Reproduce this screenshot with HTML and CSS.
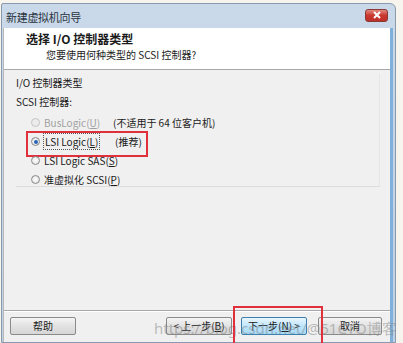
FILE: index.html
```html
<!DOCTYPE html>
<html>
<head>
<meta charset="utf-8">
<link rel="stylesheet" href="styles.css">
</head>
<body>
<div class="page">
  <div class="window">
    <div class="titlebar">
      <span class="title">新建虚拟机向导</span>
      <span class="close"><svg width="10" height="8" viewBox="0 0 10 8"><path d="M2 1 L8 7 M8 1 L2 7" stroke="#fff" stroke-width="2"/></svg></span>
    </div>
    <div class="client">
      <div class="header">
        <div class="h-title">选择 I/O 控制器类型</div>
        <div class="h-sub">您要使用何种类型的 SCSI 控制器?</div>
      </div>
      <div class="content">
        <div class="group">
          <div class="g-label">I/O 控制器类型</div>
          <div class="g-label sub">SCSI 控制器:</div>
          <div class="radios">
            <div class="row disabled">
              <span class="radio"></span>
              <span class="lbl">BusLogic(<u>U</u>)</span>
              <span class="note">(不适用于 64 位客户机)</span>
            </div>
            <div class="row marked">
              <span class="radio checked"></span>
              <span class="lbl"><span class="focus">LSI Logic(<u>L</u>)</span></span>
              <span class="note rec">(推荐)</span>
            </div>
            <div class="row">
              <span class="radio"></span>
              <span class="lbl">LSI Logic SAS(<u>S</u>)</span>
            </div>
            <div class="row">
              <span class="radio"></span>
              <span class="lbl">准虚拟化 SCSI(<u>P</u>)</span>
            </div>
          </div>
        </div>
      </div>
      <div class="footer">
        <button class="btn">帮助</button>
        <div class="spacer"></div>
        <button class="btn">&lt; 上一步(<u>B</u>)</button>
        <button class="btn primary">下一步(<u>N</u>) &gt;</button>
        <button class="btn last">取消</button>
        <span class="watermark">https://blog.csdn.net/@51CTO博客</span>
        <span class="redbox"></span>
      </div>
    </div>
  </div>
</div>
</body>
</html>
```
FILE: styles.css
```css
* { box-sizing: border-box; }
html, body { margin: 0; padding: 0; }
body {
  width: 403px; height: 343px; overflow: hidden;
  background: #f7f4ee;
  font-family: "Noto Sans CJK SC", "Noto Sans", sans-serif;
  color: #1a1a1a;
}
.page { padding: 3px 0 0 1px; }
.window {
  width: 395px;
  height: 340px;
  background: linear-gradient(#c9d9ea, #bfd1e4);
  border: 1px solid #8a9aae;
  border-top-right-radius: 6px;
  border-top-left-radius: 2px;
  display: flex;
  flex-direction: column;
  padding: 0 2px 0 1px;
}
.titlebar {
  height: 24px;
  display: flex;
  align-items: center;
  justify-content: space-between;
  padding: 1px 5px 0 3px;
}
.title { font-size: 11px; color: #2a3340; letter-spacing: -0.3px; }
.close {
  width: 23px; height: 13px;
  margin-top: -3px;
  border-radius: 3px;
  background: linear-gradient(#e08a80, #c8382e 50%, #c0302a);
  border: 1px solid #8a3a34;
  display: flex; align-items: center; justify-content: center;
}
.client {
  flex: 1;
  display: flex;
  flex-direction: column;
  background: #f0f0f0;
  border-left: 1px solid #b8b8b8;
  border-right: 3px solid #7eb0da;
}
.header {
  height: 42px;
  background: #fff;
  border-bottom: 1px solid #a8a8a8;
  padding: 3px 0 0 22px;
}
.h-title { font-size: 12px; font-weight: bold; line-height: 16px; }
.h-sub { font-size: 10px; line-height: 16px; padding-left: 20px; color: #222; }
.content {
  flex: 1;
  padding: 4px 8px 0 12px;
  border-bottom: 1px solid #a8a8a8;
}
.group {
  height: 113px;
  border-bottom: 1px solid #dcdcdc;
  border-right: 1px solid #e6e6e6;
  margin-right: 2px;
}
.g-label { font-size: 10px; line-height: 18px; }
.g-label.sub { margin-top: 1px; }
.radios { display: flex; flex-direction: column; padding-top: 2px; }
.row {
  height: 19px;
  display: flex;
  align-items: center;
  font-size: 10px;
  position: relative;
}
.radio {
  flex: none;
  width: 9px; height: 9px;
  border-radius: 50%;
  border: 1px solid #8a8a8a;
  background: radial-gradient(#ffffff, #dcdcdc);
  margin-left: 15px;
  margin-right: 3px;
  position: relative;
}
.radio.checked::after {
  content: ""; position: absolute; left: 1.5px; top: 1.5px;
  width: 4px; height: 4px; border-radius: 50%;
  background: #2a62b8;
}
.disabled .radio { border-color: #c4c4c4; background: #ececec; }
.disabled .lbl { color: #a0a0a0; }
.lbl { flex: 0 0 70px; white-space: nowrap; padding-left: 1px; }
.focus { outline: 1px dotted #555; padding: 0 1px; }
.note { white-space: nowrap; }
.note.rec { margin-left: 2px; }
.row.marked::before {
  content: ""; position: absolute;
  left: 10px; top: -1px; width: 118px; height: 22px;
  border: 2px solid #e0303c;
}
.footer {
  height: 31px;
  display: flex;
  align-items: center;
  padding: 0 8px 2px 6px;
  gap: 9px;
  position: relative;
  border-top: 1px solid #fff;
}
.spacer { flex: 1; }
.btn {
  width: 66px; height: 18px;
  font-family: "Noto Sans CJK SC", sans-serif;
  font-size: 10px;
  line-height: 14px;
  padding: 0;
  color: #1a1a1a;
  border: 1px solid #8a8a8a;
  border-radius: 2px;
  background: linear-gradient(#f4f4f4, #e2e2e2 50%, #d6d6d6);
}
.btn.last { width: 64px; margin-left: 2px; }
.btn.primary { border-color: #3c7fb1; background: linear-gradient(#eaf6fd, #bee6fd 50%, #a7d9f5); }
.watermark {
  position: absolute;
  left: 150px; top: 6px;
  font-family: "Noto Sans", sans-serif;
  font-size: 15px;
  color: rgba(130,130,130,0.5);
  pointer-events: none;
  white-space: nowrap;
}
.redbox {
  position: absolute;
  left: 229px; top: -6px; width: 90px; height: 42px;
  border: 2px solid #e0303c;
}
```
